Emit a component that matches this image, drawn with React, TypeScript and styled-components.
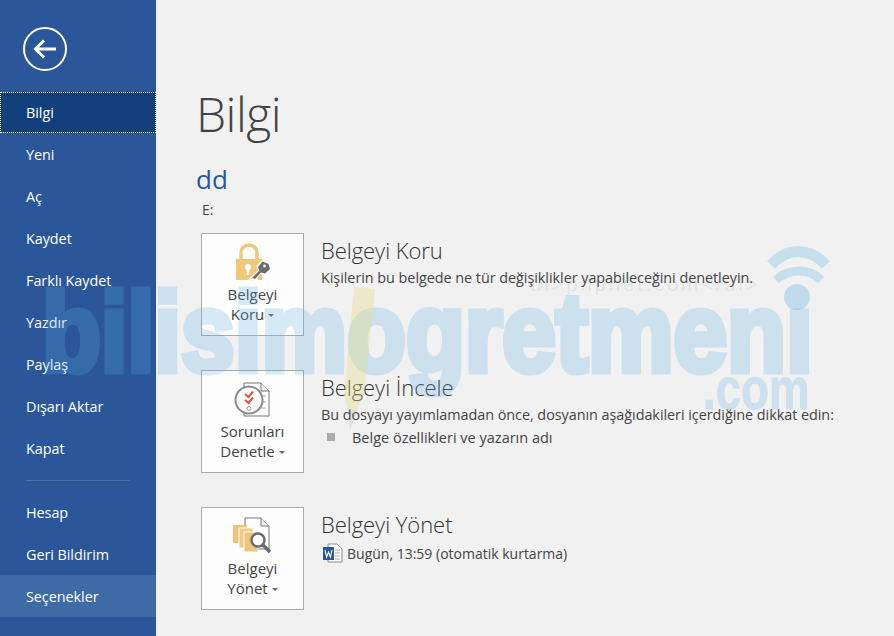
import React from 'react';
import styled, { createGlobalStyle } from 'styled-components';

const GlobalStyle = createGlobalStyle`
  html, body {
    margin: 0;
    padding: 0;
    height: 100%;
    overflow: hidden;
    background: #f1f1f1;
    font-family: "Open Sans", "Noto Sans", sans-serif;
  }
`;

const Page = styled.div`
  position: relative;
  display: flex;
  width: 894px;
  height: 636px;
  overflow: hidden;
  background: #f1f1f1;
`;

const Sidebar = styled.nav`
  display: flex;
  flex-direction: column;
  flex: 0 0 156px;
  height: 636px;
  background: #2b569a;
  color: #fff;
`;

const BackRow = styled.div`
  display: flex;
  height: 92px;
  padding: 27px 0 0 23px;
  box-sizing: border-box;
`;

const NavItem = styled.div<{ $active?: boolean; $hover?: boolean }>`
  display: flex;
  align-items: center;
  height: ${(p) => (p.$active ? '41px' : '42px')};
  padding-left: 26px;
  box-sizing: border-box;
  font-size: 14.4px;
  letter-spacing: -0.05px;
  color: #fff;
  background: ${(p) => (p.$active ? '#133f7c' : p.$hover ? '#3e6aa6' : 'transparent')};
  outline: ${(p) => (p.$active ? '1px dotted #fff' : 'none')};
  outline-offset: -1px;
`;

const NavDivider = styled.div`
  height: 1px;
  margin: 11px 26px 10px 26px;
  background: #4a72ab;
`;

const Content = styled.main`
  flex: 1;
  padding: 0 0 0 40px;
  color: #444;
`;

const Title = styled.h1`
  margin: 81px 0 0 0;
  height: 65px;
  font-size: 48px;
  line-height: 65px;
  font-weight: 300;
  letter-spacing: -0.5px;
  color: #444;
`;

const FileName = styled.div`
  height: 36px;
  margin-top: 15px;
  font-size: 26px;
  line-height: 36px;
  font-weight: 400;
  color: #2b579a;
`;

const FilePath = styled.div`
  height: 20px;
  margin: 3px 0 0 6px;
  font-size: 14px;
  line-height: 20px;
  color: #444;
`;

const Sections = styled.div`
  display: flex;
  flex-direction: column;
  gap: 34px;
  margin: 13px 0 0 5px;
`;

const Section = styled.section`
  display: flex;
  gap: 17px;
`;

const ActionButton = styled.div`
  display: flex;
  flex-direction: column;
  align-items: center;
  width: 103px;
  height: 103px;
  box-sizing: border-box;
  padding-top: 8px;
  background: #fdfdfd;
  border: 1px solid #ababab;
`;

const IconSlot = styled.div`
  display: flex;
  align-items: center;
  justify-content: center;
  height: 42px;
`;

const ActionLabel = styled.div`
  font-size: 15px;
  line-height: 20px;
  text-align: center;
  color: #444;
`;

const Caret = styled.span`
  display: inline-block;
  margin-left: 4px;
  vertical-align: middle;
  border-left: 3px solid transparent;
  border-right: 3px solid transparent;
  border-top: 3px solid #666;
`;

const SectionBody = styled.div`
  display: flex;
  flex-direction: column;
`;

const SectionTitle = styled.h2`
  margin: 0;
  height: 35px;
  font-size: 22px;
  line-height: 34px;
  font-weight: 300;
  letter-spacing: -0.05px;
  color: #333;
`;

const SectionText = styled.p`
  margin: 0;
  font-size: 14.4px;
  line-height: 20px;
  letter-spacing: -0.04px;
  color: #444;
  white-space: nowrap;
`;

const BulletRow = styled.div`
  display: flex;
  align-items: center;
  height: 22px;
  margin: 1px 0 0 6px;
  font-size: 14.5px;
  color: #444;
`;

const Bullet = styled.span`
  width: 8px;
  height: 8px;
  margin-right: 17px;
  background: #acacac;
`;

const VersionRow = styled.div`
  display: flex;
  align-items: center;
  gap: 4px;
  height: 24px;
  margin: -1px 0 0 2px;
  font-size: 14px;
  color: #444;
`;

const Watermark = styled.div`
  position: absolute;
  top: 277px;
  left: 42px;
  font-family: "Liberation Sans", sans-serif;
  font-size: 112px;
  line-height: 112px;
  font-weight: 700;
  white-space: nowrap;
  color: #5aafe1;
  -webkit-text-stroke: 7px #5aafe1;
  opacity: 0.24;
  transform-origin: left top;
  transform: scaleX(0.86);
  pointer-events: none;
`;

const WatermarkDomain = styled.div`
  position: absolute;
  top: 359px;
  left: 703px;
  font-family: "Liberation Sans", sans-serif;
  font-size: 60px;
  line-height: 60px;
  font-weight: 700;
  color: #5aafe1;
  -webkit-text-stroke: 1px #5aafe1;
  opacity: 0.24;
  transform-origin: left top;
  transform: scaleX(0.76);
  pointer-events: none;
`;

const WatermarkCode = styled.div`
  position: absolute;
  top: 272px;
  left: 530px;
  font-family: "Liberation Sans", sans-serif;
  font-size: 21px;
  line-height: 24px;
  letter-spacing: 2.5px;
  color: rgba(120, 130, 140, 0.13);
  pointer-events: none;
`;

const WatermarkArt = styled.svg`
  position: absolute;
  pointer-events: none;
`;

const BackIcon = () => (
  <svg width="44" height="44" viewBox="0 0 44 44" fill="none" stroke="#fff">
    <circle cx="22" cy="22" r="21" strokeWidth="2" />
    <path d="M12 22H33M21 13.5L12.5 22L21 30.5" strokeWidth="3" />
  </svg>
);

const LockIcon = () => (
  <svg width="40" height="40" viewBox="0 0 40 40">
    <path d="M8 17V10a8 8 0 0 1 16 0v7" fill="none" stroke="#efc878" strokeWidth="3.5" />
    <rect x="3" y="16" width="26" height="21" fill="#efc878" />
    <circle cx="15" cy="24" r="3" fill="#fff" />
    <rect x="13.8" y="25" width="2.4" height="7" fill="#fff" />
    <path d="M15 37L25 27L23 23L29 17L36 20L38 26L32 32L28 31L25 34V37H21L19 39Z" fill="#f5f5f5" />
    <path d="M18 36L26.5 27.5L25 24L29.5 18.5L35.5 21L37 26L32 30.5L28 29.5L22 36L20 35Z" fill="#6d6d6d" />
    <circle cx="31.5" cy="23" r="1.4" fill="#f5f5f5" />
  </svg>
);

const InspectIcon = () => (
  <svg width="38" height="36" viewBox="0 0 38 36" fill="none">
    <path d="M10 1H27L35 9V34H10Z" fill="#fff" stroke="#777" />
    <path d="M27 1V9H35" fill="#eee" stroke="#777" />
    <path d="M26 14H32M26 20H32M26 26H32" stroke="#aaa" />
    <circle cx="15" cy="18" r="13.5" fill="#fdfdfd" stroke="#8d8d8d" strokeWidth="2" />
    <path d="M11 12L14.5 15L19 9.5M11 18L14.5 21L19 15.5" stroke="#e2563a" strokeWidth="2" />
    <circle cx="15" cy="26.5" r="2" stroke="#999" />
  </svg>
);

const ManageIcon = () => (
  <svg width="40" height="40" viewBox="0 0 40 40" fill="none">
    <path d="M12 1H28L36 9V32H12Z" fill="#fff" stroke="#777" />
    <path d="M28 1V9H36" fill="#eee" stroke="#777" />
    <rect x="0" y="8" width="14" height="18" fill="#edc47a" />
    <rect x="6" y="11" width="14" height="20" fill="#f0c983" stroke="#fdfdfd" />
    <rect x="11" y="15" width="14" height="20" fill="#edc47a" stroke="#fdfdfd" />
    <circle cx="25" cy="23" r="6.5" fill="#fdfdfd" stroke="#6e6e6e" strokeWidth="2.5" />
    <path d="M30 28L37 35" stroke="#6e6e6e" strokeWidth="3.5" />
  </svg>
);

const WordIcon = () => (
  <svg width="20" height="20" viewBox="0 0 20 20" fill="none">
    <path d="M5 1H14L19 6V19H5Z" fill="#fff" stroke="#8b8b8b" />
    <path d="M12 7H17M12 10H17M12 13H17M12 16H17" stroke="#a5a5a5" />
    <rect x="0" y="4" width="11" height="13" fill="#2b579a" />
    <path d="M2 7L3.6 14L5.5 9L7.4 14L9 7" stroke="#fff" strokeWidth="1.1" />
  </svg>
);

const mainItems = ['Yeni', 'Aç', 'Kaydet', 'Farklı Kaydet', 'Yazdır', 'Paylaş', 'Dışarı Aktar', 'Kapat'];

export default function App() {
  return (
    <Page>
      <GlobalStyle />
      <Sidebar>
        <BackRow>
          <BackIcon />
        </BackRow>
        <NavItem $active>Bilgi</NavItem>
        {mainItems.map((item) => (
          <NavItem key={item}>{item}</NavItem>
        ))}
        <NavDivider />
        <NavItem>Hesap</NavItem>
        <NavItem>Geri Bildirim</NavItem>
        <NavItem $hover>Seçenekler</NavItem>
      </Sidebar>

      <Content>
        <Title>Bilgi</Title>
        <FileName>dd</FileName>
        <FilePath>E:</FilePath>
        <Sections>
          <Section>
            <ActionButton>
              <IconSlot>
                <LockIcon />
              </IconSlot>
              <ActionLabel>
                Belgeyi
                <br />
                Koru
                <Caret />
              </ActionLabel>
            </ActionButton>
            <SectionBody>
              <SectionTitle>Belgeyi Koru</SectionTitle>
              <SectionText>Kişilerin bu belgede ne tür değişiklikler yapabileceğini denetleyin.</SectionText>
            </SectionBody>
          </Section>
          <Section>
            <ActionButton>
              <IconSlot>
                <InspectIcon />
              </IconSlot>
              <ActionLabel>
                Sorunları
                <br />
                Denetle
                <Caret />
              </ActionLabel>
            </ActionButton>
            <SectionBody>
              <SectionTitle>Belgeyi İncele</SectionTitle>
              <SectionText>Bu dosyayı yayımlamadan önce, dosyanın aşağıdakileri içerdiğine dikkat edin:</SectionText>
              <BulletRow>
                <Bullet />
                Belge özellikleri ve yazarın adı
              </BulletRow>
            </SectionBody>
          </Section>
          <Section>
            <ActionButton>
              <IconSlot>
                <ManageIcon />
              </IconSlot>
              <ActionLabel>
                Belgeyi
                <br />
                Yönet
                <Caret />
              </ActionLabel>
            </ActionButton>
            <SectionBody>
              <SectionTitle>Belgeyi Yönet</SectionTitle>
              <VersionRow>
                <WordIcon />
                Bugün, 13:59 (otomatik kurtarma)
              </VersionRow>
            </SectionBody>
          </Section>
        </Sections>
      </Content>

      <WatermarkCode>ui&gt;phpnet.com&lt;/ul&gt;</WatermarkCode>
      <Watermark>bilisimogretmenı</Watermark>
      <WatermarkDomain>.com</WatermarkDomain>
      <WatermarkArt style={{ left: 765, top: 245 }} width="70" height="70" viewBox="0 0 70 70" fill="none">
        <path d="M6 20C22 2 44 2 61 20" stroke="rgba(90,175,225,0.28)" strokeWidth="11" />
        <path d="M11 35C24 23 44 23 56 35" stroke="rgba(90,175,225,0.28)" strokeWidth="9" />
        <circle cx="32" cy="52" r="13" fill="rgba(90,175,225,0.32)" />
      </WatermarkArt>
      <WatermarkArt style={{ left: 335, top: 285 }} width="42" height="150" viewBox="0 0 42 150">
        <path d="M19 2L40 4L29 110L22 125H13L9 110Z" fill="rgba(225,220,130,0.36)" />
        <path d="M13 125H22L15 145Z" fill="rgba(120,120,120,0.14)" />
      </WatermarkArt>
    </Page>
  );
}
